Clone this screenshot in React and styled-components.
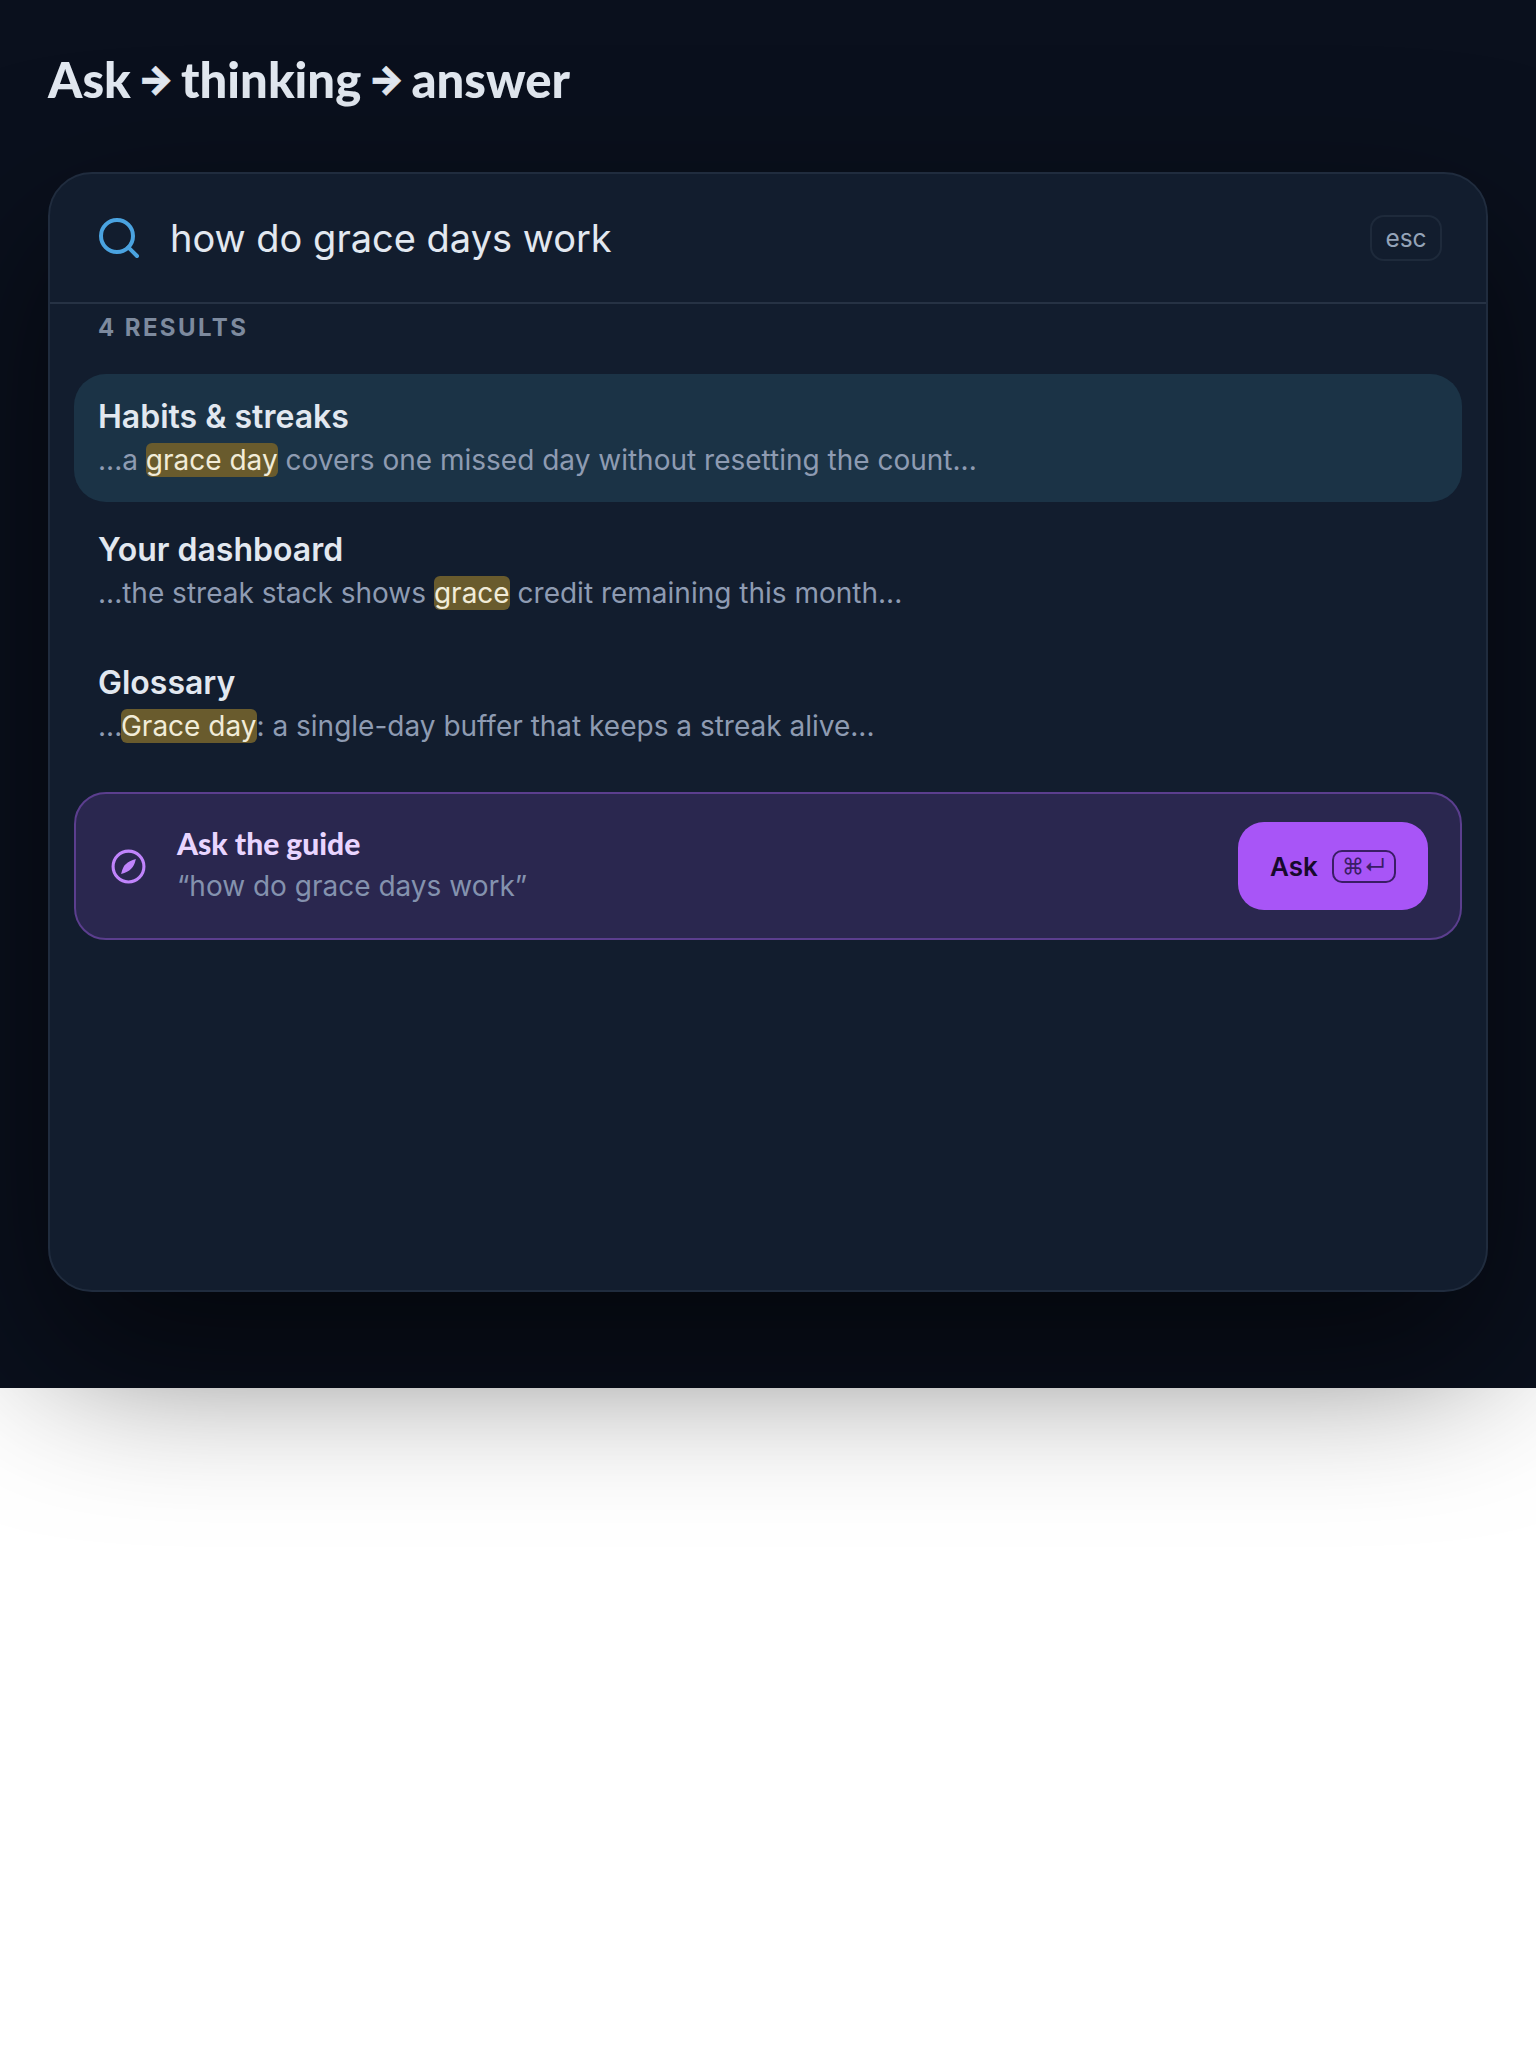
import React from 'react';
import styled, { createGlobalStyle } from 'styled-components';

const GlobalStyle = createGlobalStyle`
  * { box-sizing: border-box; }
  html { height: 100%; }
  body { margin: 0; min-height: 100%; font-family: Inter, "Liberation Sans", sans-serif; }
`;

const Page = styled.section`
  position: relative;
  background: #0a101d;
  padding: 48px 48px 96px;
`;

const Heading = styled.h1`
  margin: 0 0 62px;
  height: 62px;
  display: flex;
  align-items: center;
  gap: 7px;
  font-family: Lato, sans-serif;
  font-weight: 900;
  font-size: 49px;
  line-height: 62px;
  color: #e2e8f0;
`;

const Arrow = styled.span`
  font-family: Inter, sans-serif;
  font-weight: 900;
  font-size: 38px;
  -webkit-text-stroke: 0.6px #e2e8f0;
`;

const Card = styled.div`
  position: relative;
  height: 1120px;
  background: #121d2e;
  border: 2px solid #202c3e;
  border-radius: 44px;
  box-shadow: 0 64px 160px rgba(0, 0, 0, 0.6);
`;

const SearchRow = styled.div`
  height: 130px;
  display: flex;
  align-items: center;
  padding: 0 44px 0 45px;
  gap: 27px;
  border-bottom: 2px solid #263244;
`;

const SearchText = styled.div`
  flex: 1;
  font-size: 38px;
  color: #e2e8f0;
`;

const EscKey = styled.span`
  width: 72px;
  height: 46px;
  display: flex;
  align-items: center;
  justify-content: center;
  border: 2px solid #1e2a3b;
  border-radius: 14px;
  font-size: 24.5px;
  color: #94a3b8;
`;

const Count = styled.div`
  padding: 10px 48px 0;
  height: 70px;
  font-size: 24px;
  line-height: 28px;
  font-weight: 700;
  letter-spacing: 2.4px;
  color: #7d8a9e;
`;

const List = styled.div`
  display: flex;
  flex-direction: column;
  gap: 5px;
  padding: 0 24px;
`;

const Result = styled.div`
  height: 128px;
  padding: 23px 24px 0;
  border-radius: 32px;
  background: ${p => (p.$active ? '#1b3346' : 'transparent')};
`;

const ResultTitle = styled.div`
  font-size: 32px;
  line-height: 40px;
  font-weight: 600;
  color: #e2e8f0;
`;

const Snippet = styled.div`
  font-size: 28px;
  line-height: 46px;
  color: #8e9bb2;
`;

const Mark = styled.mark`
  background: #695b2d;
  color: #f1ecd8;
  border-radius: 6px;
`;

const AskPanel = styled.div`
  height: 148px;
  margin: 24px 24px 0;
  display: flex;
  align-items: center;
  padding: 0 32px 0 34px;
  border: 2px solid #5b3e8e;
  border-radius: 32px;
  background: #2a274f;
`;

const AskIcon = styled.svg`
  width: 37px;
  height: 37px;
  flex: none;
  color: #c084fc;
`;

const AskBody = styled.div`
  flex: 1;
  margin-left: 30px;
  padding-bottom: 1px;
`;

const AskTitle = styled.div`
  font-family: Lato, sans-serif;
  font-weight: 900;
  font-size: 30px;
  line-height: 40px;
  color: #e9d5ff;
`;

const AskQuery = styled.div`
  font-size: 28px;
  line-height: 46px;
  color: #8492ae;
`;

const AskButton = styled.button`
  width: 190px;
  height: 88px;
  display: flex;
  align-items: center;
  justify-content: center;
  gap: 14px;
  border: none;
  border-radius: 26px;
  background: #a855f7;
  color: #170a2c;
  font-family: Inter, sans-serif;
  font-size: 26px;
  font-weight: 600;
`;

const Shortcut = styled.kbd`
  width: 64px;
  height: 33px;
  display: flex;
  align-items: center;
  justify-content: center;
  border: 2px solid #3a1d66;
  border-radius: 10px;
  color: #3a1d66;
  font-family: Inter, "DejaVu Sans", sans-serif;
  font-size: 22px;
  font-weight: 400;
  line-height: 1;
`;

const results = [
  { title: 'Habits & streaks', before: '...a ', hit: 'grace day', after: ' covers one missed day without resetting the count...', active: true },
  { title: 'Your dashboard', before: '...the streak stack shows ', hit: 'grace', after: ' credit remaining this month...' },
  { title: 'Glossary', before: '...', hit: 'Grace day', after: ': a single-day buffer that keeps a streak alive...' },
];

export default function App() {
  return (
    <>
      <GlobalStyle />
      <Page>
        <Heading>
          Ask <Arrow>→</Arrow> thinking <Arrow>→</Arrow> answer
        </Heading>
        <Card>
          <SearchRow>
            <svg width="48" height="48" viewBox="0 0 24 24" fill="none" stroke="#4aa3e0" strokeWidth="2" strokeLinecap="round" strokeLinejoin="round">
              <path d="m21 21-4.34-4.34" />
              <circle cx="11" cy="11" r="8" />
            </svg>
            <SearchText>how do grace days work</SearchText>
            <EscKey>esc</EscKey>
          </SearchRow>
          <Count>4 RESULTS</Count>
          <List>
            {results.map(r => (
              <Result key={r.title} $active={r.active}>
                <ResultTitle>{r.title}</ResultTitle>
                <Snippet>
                  {r.before}
                  <Mark>{r.hit}</Mark>
                  {r.after}
                </Snippet>
              </Result>
            ))}
          </List>
          <AskPanel>
            <AskIcon viewBox="0 0 24 24" fill="none" stroke="currentColor" strokeWidth="2" strokeLinecap="round" strokeLinejoin="round">
              <circle cx="12" cy="12" r="10" />
              <path fill="currentColor" stroke="none" d="M16.8 7.2Q15.6 12.3 13.6 13.6 11.7 15.6 7.2 16.8 8.4 11.7 10.4 10.4 12.3 8.4 16.8 7.2z" />
            </AskIcon>
            <AskBody>
              <AskTitle>Ask the guide</AskTitle>
              <AskQuery>“how do grace days work”</AskQuery>
            </AskBody>
            <AskButton>
              Ask
              <Shortcut>⌘↵</Shortcut>
            </AskButton>
          </AskPanel>
        </Card>
      </Page>
    </>
  );
}
